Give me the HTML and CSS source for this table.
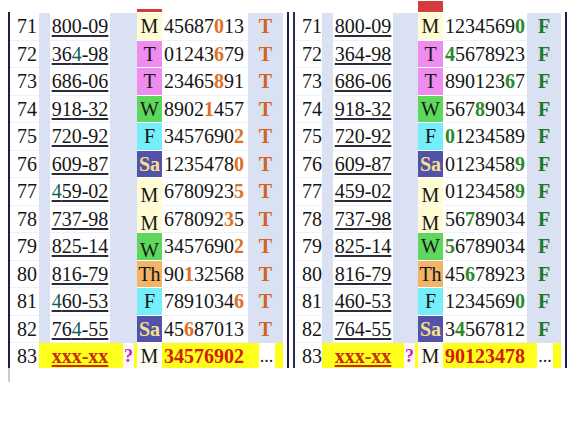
FILE: index.html
```html
<!DOCTYPE html>
<html>
<head>
<meta charset="utf-8">
<link rel="stylesheet" href="styles.css">
</head>
<body>
<div class="page">
  <div class="panel left">
    <div class="row cap"><span></span><span></span><span></span><span></span><span class="capred"></span><span></span><span></span></div>
    <div class="tbl">
      <div class="row"><span class="n">71</span><span class="g"></span><span class="c"><u>800-09</u></span><span class="q"></span><span class="d mo">M</span><span class="v">45687<b class="o">0</b>13</span><span class="l t">T</span></div>
      <div class="row"><span class="n">72</span><span class="g"></span><span class="c"><u>36<i class="tl">4</i>-98</u></span><span class="q"></span><span class="d tu">T</span><span class="v">01243<b class="o">6</b>79</span><span class="l t">T</span></div>
      <div class="row"><span class="n">73</span><span class="g"></span><span class="c"><u>686-06</u></span><span class="q"></span><span class="d tu">T</span><span class="v">23465<b class="o">8</b>91</span><span class="l t">T</span></div>
      <div class="row"><span class="n">74</span><span class="g"></span><span class="c"><u>918-32</u></span><span class="q"></span><span class="d we">W</span><span class="v">8902<b class="o">1</b>457</span><span class="l t">T</span></div>
      <div class="row"><span class="n">75</span><span class="g"></span><span class="c"><u>720-92</u></span><span class="q"></span><span class="d fr">F</span><span class="v">3457690<b class="o">2</b></span><span class="l t">T</span></div>
      <div class="row"><span class="n">76</span><span class="g"></span><span class="c"><u>609-87</u></span><span class="q"></span><span class="d sa">Sa</span><span class="v">1235478<b class="o">0</b></span><span class="l t">T</span></div>
      <div class="row"><span class="n">77</span><span class="g"></span><span class="c"><u><i class="tl">4</i>59-02</u></span><span class="q"></span><span class="d mo low">M</span><span class="v">6780923<b class="o">5</b></span><span class="l t">T</span></div>
      <div class="row"><span class="n">78</span><span class="g"></span><span class="c"><u>737-98</u></span><span class="q"></span><span class="d mo low">M</span><span class="v">678092<b class="o">3</b>5</span><span class="l t">T</span></div>
      <div class="row"><span class="n">79</span><span class="g"></span><span class="c"><u>825-14</u></span><span class="q"></span><span class="d we low">W</span><span class="v">3457690<b class="o">2</b></span><span class="l t">T</span></div>
      <div class="row"><span class="n">80</span><span class="g"></span><span class="c"><u>816-79</u></span><span class="q"></span><span class="d th">Th</span><span class="v">90<b class="o">1</b>32568</span><span class="l t">T</span></div>
      <div class="row"><span class="n">81</span><span class="g"></span><span class="c"><u><i class="tl">4</i>60-53</u></span><span class="q"></span><span class="d fr">F</span><span class="v">7891034<b class="o">6</b></span><span class="l t">T</span></div>
      <div class="row"><span class="n">82</span><span class="g"></span><span class="c"><u>76<i class="tl">4</i>-55</u></span><span class="q"></span><span class="d sa">Sa</span><span class="v">45<b class="o">6</b>87013</span><span class="l t">T</span></div>
      <div class="row last"><span class="n">83</span><span class="g y"></span><span class="c y"><u class="xx">xxx-xx</u></span><span class="q y"><span class="qbox">?</span></span><span class="d cr">M</span><span class="v y red">34576902</span><span class="l y"><span class="dots">...</span></span></div>
    </div>
    <div class="tail"></div>
  </div>
  <div class="panel right">
    <div class="row cap"><span></span><span></span><span></span><span></span><span class="capred tall"></span><span></span><span></span></div>
    <div class="tbl">
      <div class="row"><span class="n">71</span><span class="g"></span><span class="c"><u>800-09</u></span><span class="q"></span><span class="d mo">M</span><span class="v">1234569<b class="gr">0</b></span><span class="l f">F</span></div>
      <div class="row"><span class="n">72</span><span class="g"></span><span class="c"><u>364-98</u></span><span class="q"></span><span class="d tu">T</span><span class="v"><b class="gr">4</b>5678923</span><span class="l f">F</span></div>
      <div class="row"><span class="n">73</span><span class="g"></span><span class="c"><u>686-06</u></span><span class="q"></span><span class="d tu">T</span><span class="v">890123<b class="gr">6</b>7</span><span class="l f">F</span></div>
      <div class="row"><span class="n">74</span><span class="g"></span><span class="c"><u>918-32</u></span><span class="q"></span><span class="d we">W</span><span class="v">567<b class="gr">8</b>9034</span><span class="l f">F</span></div>
      <div class="row"><span class="n">75</span><span class="g"></span><span class="c"><u>720-92</u></span><span class="q"></span><span class="d fr">F</span><span class="v"><b class="gr">0</b>1234589</span><span class="l f">F</span></div>
      <div class="row"><span class="n">76</span><span class="g"></span><span class="c"><u>609-87</u></span><span class="q"></span><span class="d sa">Sa</span><span class="v">0123458<b class="gr">9</b></span><span class="l f">F</span></div>
      <div class="row"><span class="n">77</span><span class="g"></span><span class="c"><u>459-02</u></span><span class="q"></span><span class="d mo low">M</span><span class="v">0123458<b class="gr">9</b></span><span class="l f">F</span></div>
      <div class="row"><span class="n">78</span><span class="g"></span><span class="c"><u>737-98</u></span><span class="q"></span><span class="d mo low">M</span><span class="v">56<b class="gr">7</b>89034</span><span class="l f">F</span></div>
      <div class="row"><span class="n">79</span><span class="g"></span><span class="c"><u>825-14</u></span><span class="q"></span><span class="d we">W</span><span class="v"><b class="gr">5</b>6789034</span><span class="l f">F</span></div>
      <div class="row"><span class="n">80</span><span class="g"></span><span class="c"><u>816-79</u></span><span class="q"></span><span class="d th">Th</span><span class="v">45<b class="gr">6</b>78923</span><span class="l f">F</span></div>
      <div class="row"><span class="n">81</span><span class="g"></span><span class="c"><u>460-53</u></span><span class="q"></span><span class="d fr">F</span><span class="v">1234569<b class="gr">0</b></span><span class="l f">F</span></div>
      <div class="row"><span class="n">82</span><span class="g"></span><span class="c"><u>764-55</u></span><span class="q"></span><span class="d sa">Sa</span><span class="v">3<b class="gr">4</b>567812</span><span class="l f">F</span></div>
      <div class="row last"><span class="n">83</span><span class="g y"></span><span class="c y"><u class="xx">xxx-xx</u></span><span class="q y"><span class="qbox">?</span></span><span class="d cr">M</span><span class="v y red">90123478</span><span class="l y"><span class="dots">...</span></span></div>
    </div>
  </div>
</div>
</body>
</html>
```
FILE: styles.css
```css
html, body {
  margin: 0;
  padding: 0;
  background: #ffffff;
}
body {
  font-family: "Liberation Serif", "Times New Roman", serif;
  font-size: 20px;
  color: #161616;
}
.page {
  display: flex;
  align-items: flex-start;
  padding-left: 8px;
}
.panel {
  display: flex;
  flex-direction: column;
}
.left {
  --cols: 29px 11px 60px 27px 25px 86px 35px;
}
.right {
  --cols: 27px 11px 60px 25px 25px 84px 34px;
  margin-left: 4px;
}
.row {
  display: grid;
  grid-template-columns: var(--cols);
  height: 27.5px;
  line-height: 27.5px;
  background: #dae1f3;
}
.cap {
  height: 12px;
  background: transparent;
  align-items: end;
  margin-left: 2px;
}
.capred {
  height: 3px;
  background: #d23c3c;
}
.capred.tall {
  height: 11px;
}
.tbl {
  height: 356px;
  overflow: hidden;
  padding-top: 1px;
  box-sizing: border-box;
  border-left: 2px solid #1d1d52;
  border-right: 2px solid #1d1d52;
  padding-right: 4px;
  background: #ffffff;
}
.right .tbl {
  border-left-color: #2a2a5a;
}
.tail {
  width: 0;
  height: 14px;
  border-left: 2px solid #c9cad6;
}
.row > span {
  display: block;
  white-space: nowrap;
  overflow: hidden;
}
.n {
  background: #ffffff;
  padding-left: 7px;
  box-shadow: inset 0 -1px 0 #eef1f8;
}
.c {
  background: #ffffff;
  text-align: center;
  box-shadow: inset 0 -1px 0 #eef1f8;
}
.c u {
  text-decoration: underline;
  text-decoration-thickness: 2px;
  text-underline-offset: 2px;
  text-decoration-color: #2b2b3a;
}
.tl {
  font-style: normal;
  color: #0f5e5a;
}
.d {
  text-align: center;
  box-shadow: inset 0 -1px 0 #ffffff;
}
.low {
  line-height: 34px;
}
.mo { background: #fffbd2; }
.tu { background: #ef8cef; }
.we { background: #5dd85d; }
.fr { background: #74eef8; }
.th { background: #f4b468; }
.sa {
  background: #5252a8;
  color: #f7e08a;
  font-weight: bold;
}
.cr { background: #fdfdf2; }
.v {
  background: #ffffff;
  padding-left: 2px;
  box-shadow: inset 0 -1px 0 #eef1f8;
}
.o {
  color: #e0701e;
}
.gr {
  color: #2a8a2a;
}
.l {
  text-align: center;
  font-weight: bold;
}
.t { color: #d0651f; }
.f { color: #1f7a25; }
.y { background: #ffff1e; box-shadow: none; }
.xx {
  color: #cc2a00;
  font-weight: bold;
  text-decoration-color: #cc2a00 !important;
}
.red {
  color: #d41a0a;
  font-weight: bold;
}
.q.y {
  display: flex;
  justify-content: flex-end;
  padding-right: 3px;
}
.qbox {
  display: block;
  width: 11px;
  background: #fdf8f4;
  color: #c81ec8;
  font-weight: bold;
  font-size: 18px;
  text-align: center;
}
.l.y {
  display: flex;
  justify-content: center;
  padding-left: 2px;
}
.dots {
  display: block;
  width: 16px;
  background: #ffffff;
  color: #222;
  font-weight: normal;
  font-size: 18px;
  text-align: center;
}
```
